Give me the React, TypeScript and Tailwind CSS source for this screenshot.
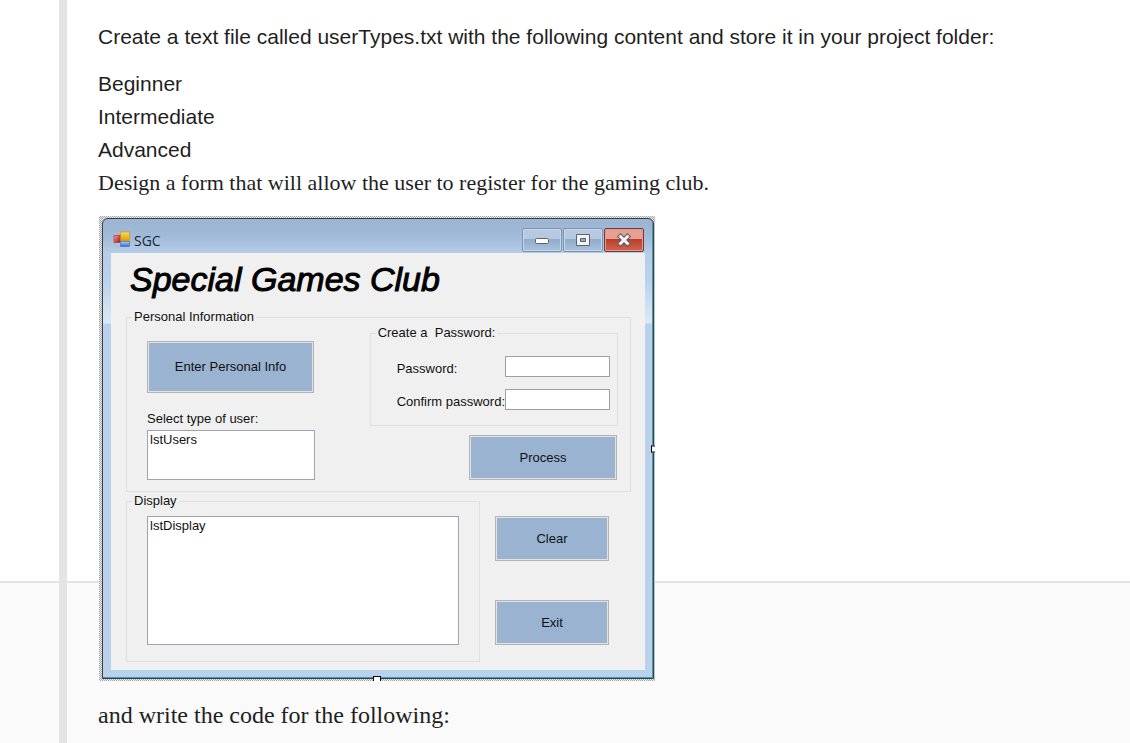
import type { ReactNode } from 'react';
import clsx from 'clsx';

const userTypes = ['Beginner', 'Intermediate', 'Advanced'];

function FormButton({ className, children }: { className?: string; children: ReactNode }) {
  return (
    <button
      type="button"
      className={clsx(
        'border border-[#b4b4b4] bg-[#99b3d1] text-center shadow-[inset_0_0_0_1px_#e0e2e4]',
        className
      )}
    >
      {children}
    </button>
  );
}

function GroupBox({ title, className, children }: { title: string; className?: string; children: ReactNode }) {
  return (
    <fieldset className={clsx('border border-[#dfdfdf]', className)}>
      <legend className="ml-[5px] whitespace-pre px-0.5">{title}</legend>
      {children}
    </fieldset>
  );
}

function ListBox({ id, item, className }: { id: string; item: string; className?: string }) {
  return (
    <select
      id={id}
      size={2}
      aria-label={item}
      className={clsx('block overflow-hidden border border-[#a0a3ac] bg-white py-px text-[13px] leading-4', className)}
    >
      <option className="min-h-4 p-0 px-0.5 leading-4">{item}</option>
    </select>
  );
}

function PasswordRow({ id, label }: { id: string; label: string }) {
  return (
    <div className="flex items-center justify-between">
      <label htmlFor={id} className="pt-1 whitespace-nowrap">
        {label}
      </label>
      <input id={id} type="password" className="h-[21px] w-[105px] border border-[#a0a0a0] bg-white px-1" />
    </div>
  );
}

function AppIcon() {
  return (
    <svg width="18" height="17" viewBox="0 0 18 17" aria-hidden="true">
      <defs>
        <linearGradient id="yellow" x1="0" y1="0" x2="0" y2="1">
          <stop offset="0" stopColor="#ffd95a" />
          <stop offset="1" stopColor="#e09a00" />
        </linearGradient>
        <linearGradient id="red" x1="0" y1="0" x2="1" y2="1">
          <stop offset="0" stopColor="#f49a8c" />
          <stop offset="1" stopColor="#b80f0f" />
        </linearGradient>
        <linearGradient id="blue" x1="0" y1="0" x2="0" y2="1">
          <stop offset="0" stopColor="#a9cbff" />
          <stop offset="1" stopColor="#3569d6" />
        </linearGradient>
      </defs>
      <path d="M1.5 4.5V1.5H7M1.5 12v3.5H7" fill="none" stroke="#b4b9c0" />
      <rect x="7.5" y="1" width="9" height="9" fill="url(#yellow)" stroke="#c98f10" strokeWidth="0.6" />
      <rect x="1" y="4.5" width="6" height="7" fill="url(#red)" stroke="#b03030" strokeWidth="0.6" />
      <rect x="7.5" y="10.5" width="9" height="5" fill="url(#blue)" stroke="#3a67c0" strokeWidth="0.6" />
    </svg>
  );
}

const captionButton =
  'grid h-6 w-10 place-items-center rounded-xs border border-[#7d93b0] bg-linear-to-b from-[#b7c9de] from-45% via-[#8fabca] via-45% to-[#a9c2de] shadow-[inset_0_0_0_1px_#c6d7e9]';

function TitleBar() {
  return (
    <div className="flex h-[34px] items-start pl-0.5">
      <div className="flex flex-1 items-start gap-[3px] pt-3 font-['Open_Sans',sans-serif] text-sm leading-5 text-[#1d2733]">
        <AppIcon />
        <span>SGC</span>
      </div>
      <div className="flex gap-px pt-[9px] pr-px">
        <button type="button" aria-label="Minimize" className={captionButton}>
          <svg width="16" height="16" viewBox="0 0 16 16">
            <rect x="1.5" y="6.5" width="13" height="5" rx="1" fill="#fff" stroke="#596577" />
          </svg>
        </button>
        <button type="button" aria-label="Maximize" className={captionButton}>
          <svg width="16" height="16" viewBox="0 0 16 16">
            <path
              d="M1.5 2.5h13v11h-13zM5.5 6.5v3h5v-3z"
              fill="#f4f4f4"
              fillRule="evenodd"
              stroke="#596577"
            />
          </svg>
        </button>
        <button
          type="button"
          aria-label="Close"
          className="grid h-6 w-10 place-items-center rounded-xs border border-[#7a3a3c] bg-linear-to-b from-[#e3a193] from-45% via-[#b83c25] via-45% to-[#cf6650] shadow-[inset_0_0_0_1px_#dc9b8e]"
        >
          <svg width="16" height="16" viewBox="0 0 16 16">
            <path d="M4.5 4.5l7 7M11.5 4.5l-7 7" stroke="#5f5664" strokeWidth="5" strokeLinecap="square" />
            <path d="M4.5 4.5l7 7M11.5 4.5l-7 7" stroke="#f5f5f5" strokeWidth="3" strokeLinecap="square" />
          </svg>
        </button>
      </div>
    </div>
  );
}

function SgcForm() {
  return (
    <div className="relative w-fit border-r border-[#c4c4c4] bg-[repeating-conic-gradient(#a8a8a8_0_25%,#ececec_0_50%)] bg-size-[2px_2px] pt-0.5 pb-0.5 pl-[3px]">
      <div className="rounded-t-md border border-[#3a3f45] bg-[linear-gradient(to_bottom,#9bb5d3_0,#9fb9d7_16px,#b5cde7_34px,#b9d1ea_60px,#dce9f6_104px,#b9d1ea_105px)] px-2 pb-2 shadow-[inset_-1px_-1px_0_#35a0b8]">
        <TitleBar />
        <form className="bg-[#f0f0f0] pb-2 pl-[15px] text-[13px] leading-4 text-[#111]">
          <h1 className="pb-1 pl-1 text-[34px] leading-[52px] font-normal text-black italic [-webkit-text-stroke:1px_black]">
            Special Games Club
          </h1>
          <GroupBox title="Personal Information" className="mr-3.5 w-[505px]">
            <div className="flex justify-between pr-[13px] pb-[11px] pl-5">
              <div className="pt-4">
                <FormButton className="h-[52px] w-[167px]">Enter Personal Info</FormButton>
                <label htmlFor="lstUsers" className="mt-[18px] mb-[3px] block">
                  Select type of user:
                </label>
                <ListBox id="lstUsers" item="lstUsers" className="h-[50px] w-[168px]" />
              </div>
              <div className="flex flex-col items-end gap-[9px]">
                <GroupBox title="Create a  Password:" className="-mr-px w-[247px]">
                  <div className="flex flex-col gap-3 pt-[15px] pr-[7px] pb-[15px] pl-[26px]">
                    <PasswordRow id="password" label="Password:" />
                    <PasswordRow id="confirm" label="Confirm password:" />
                  </div>
                </GroupBox>
                <FormButton className="h-[45px] w-[148px]">Process</FormButton>
              </div>
            </div>
          </GroupBox>
          <div className="flex gap-[15px] pt-px">
            <GroupBox title="Display" className="w-[354px]">
              <div className="px-5 pt-[7px] pb-4">
                <ListBox id="lstDisplay" item="lstDisplay" className="h-[129px] w-full" />
              </div>
            </GroupBox>
            <div className="flex flex-col gap-[39px] pt-[23px]">
              <FormButton className="h-[45px] w-[114px]">Clear</FormButton>
              <FormButton className="h-[45px] w-[114px]">Exit</FormButton>
            </div>
          </div>
        </form>
      </div>
      {/* resize grips */}
      <span className="absolute top-1/2 -right-px h-[7px] w-1 -translate-y-1/2 border border-r-0 border-black bg-white" />
      <span className="absolute bottom-0 left-1/2 h-[5px] w-2 -translate-x-1/2 border border-b-0 border-black bg-white" />
    </div>
  );
}

export default function App() {
  return (
    <div className="flex min-h-screen bg-[linear-gradient(to_bottom,#fff_581px,#e4e4e4_581px,#e4e4e4_583px,#fafafa_583px)] font-['Liberation_Sans',Arial,sans-serif] text-[#1f1f1f]">
      <div className="w-[59px] shrink-0" />
      <main className="flex-1 border-l-8 border-[#e4e4e4] pl-8 text-[21px] leading-8">
        <p className="-ml-px pt-[21px]">
          Create a text file called userTypes.txt with the following content and store it in your project folder:
        </p>
        <ul className="-ml-px pt-3.5 leading-[33px]">
          {userTypes.map((type) => (
            <li key={type}>{type}</li>
          ))}
        </ul>
        <p className="-ml-px pt-px font-['Liberation_Serif',serif] text-[22px]">
          Design a form that will allow the user to register for the gaming club.
        </p>
        <div className="pt-[17px]">
          <SgcForm />
        </div>
        <p className="-ml-px pt-[18px] font-['Liberation_Serif',serif] text-2xl leading-8">
          and write the code for the following:
        </p>
      </main>
    </div>
  );
}
